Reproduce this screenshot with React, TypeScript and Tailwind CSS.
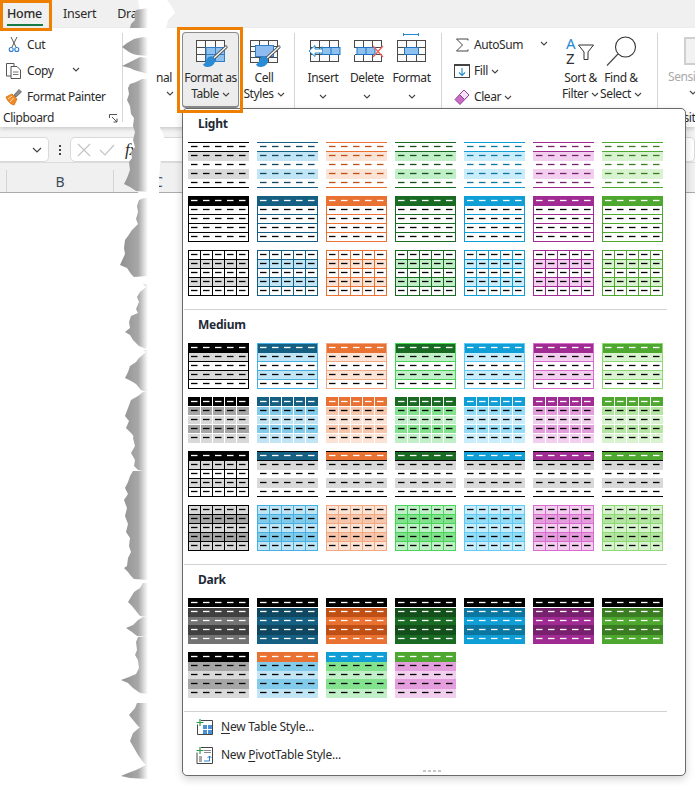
import type { ReactNode } from 'react';

type Theme = { c: string; dark: string; t80: string; t60: string; t40: string };
type Kind = 'light1' | 'light2' | 'light3' | 'med1' | 'med2' | 'med3' | 'med4' | 'dark1' | 'dark2';

const black: Theme = { c: '#000000', dark: '#000000', t80: '#d9d9d9', t60: '#a6a6a6', t40: '#000000' };
const blue: Theme = { c: '#156082', dark: '#0f4761', t80: '#c1e5f5', t60: '#83cbeb', t40: '#45b0e1' };
const orange: Theme = { c: '#e97132', dark: '#c04f15', t80: '#fbe3d6', t60: '#f6c6ad', t40: '#f1a983' };
const green: Theme = { c: '#196b24', dark: '#124f1a', t80: '#c1f0c8', t60: '#83e28e', t40: '#47d459' };
const cyan: Theme = { c: '#0f9ed5', dark: '#0b769f', t80: '#caedfb', t60: '#95dcf7', t40: '#61cbf3' };
const purple: Theme = { c: '#a02b93', dark: '#77206d', t80: '#f2cfee', t60: '#e59edd', t40: '#d86dcd' };
const lime: Theme = { c: '#4ea72e', dark: '#3a7c22', t80: '#d9f2d0', t60: '#b4e5a2', t40: '#8ed973' };
const themes = [black, blue, orange, green, cyan, purple, lime];

const R = (x: number, y: number, w: number, h: number, fill: string, key: string) => (
  <rect key={key} x={x} y={y} width={w} height={h} fill={fill} />
);

// five rows of dashes, the header row may be another colour
const dashes = (header: string, body: string) => (
  <g shapeRendering="geometricPrecision">
    {[4, 13, 22, 31, 40].map((y, row) =>
      [3, 15, 27, 39, 51].map((x) => (
        <rect key={`d${row}-${x}`} x={x} y={y - 0.15} width={6.5} height={1.3} fill={row === 0 ? header : body} />
      )),
    )}
  </g>
);

const hLines = (ys: number[], color: string) => ys.map((y) => R(0, y, 61, 1, color, `h${y}`));
const vLines = (xs: number[], color: string) => xs.map((x) => R(x, 0, 1, 46, color, `v${x}`));

const Swatch = ({ kind, t, alt, plain }: { kind: Kind; t: Theme; alt?: Theme; plain?: boolean }) => {
  let body: ReactNode = null;
  if (kind === 'light1') {
    body = (
      <>
        {R(0, 9, 61, 10, t.t80, 'b1')}
        {R(0, 27, 61, 10, t.t80, 'b2')}
        {hLines([0, 9, 45], t.c)}
        {dashes(t.dark, t.dark)}
      </>
    );
  }
  if (kind === 'light2') {
    body = (
      <>
        {R(0, 0, 61, 10, t.c, 'hd')}
        {hLines([18, 27, 36, 45], t.c)}
        {vLines([0, 60], t.c)}
        {dashes('#ffffff', '#000000')}
      </>
    );
  }
  if (kind === 'light3') {
    body = (
      <>
        {R(0, 9, 61, 10, t.t80, 'b1')}
        {R(0, 27, 61, 10, t.t80, 'b2')}
        {hLines([0, 9, 18, 27, 36, 45], t.c)}
        {vLines([0, 12, 24, 36, 48, 60], t.c)}
        {dashes('#000000', '#000000')}
      </>
    );
  }
  if (kind === 'med1') {
    body = (
      <>
        {R(0, 9, 61, 10, t.t80, 'b1')}
        {R(0, 27, 61, 10, t.t80, 'b2')}
        {hLines([0, 18, 27, 36, 45], t.t40)}
        {vLines([0, 60], t.t40)}
        {R(1, 1, 59, 8.5, t.c, 'hd')}
        {dashes('#ffffff', '#000000')}
      </>
    );
  }
  if (kind === 'med2') {
    body = (
      <>
        {R(0, 0, 61, 9, t.c, 'hd')}
        {R(0, 10, 61, 8, t.t60, 'r2')}
        {R(0, 19, 61, 8, t.t80, 'r3')}
        {R(0, 28, 61, 8, t.t60, 'r4')}
        {R(0, 37, 61, 9, t.t80, 'r5')}
        {vLines([12, 24, 36, 48], '#ffffff')}
        {dashes('#ffffff', '#000000')}
      </>
    );
  }
  if (kind === 'med3' && !plain) {
    body = (
      <>
        {R(0, 0, 61, 10, t.c, 'hd')}
        {R(0, 10, 61, 9, '#d9d9d9', 'b1')}
        {R(0, 27, 61, 10, '#d9d9d9', 'b2')}
        {hLines([0, 9, 45], '#000000')}
        {dashes('#ffffff', '#000000')}
      </>
    );
  }
  if (kind === 'med3' && plain) {
    body = (
      <>
        {R(0, 9, 61, 10, t.t80, 'b1')}
        {R(0, 27, 61, 10, t.t80, 'b2')}
        {hLines([0, 9, 18, 27, 36, 45], '#000000')}
        {vLines([0, 12, 24, 36, 48, 60], '#000000')}
        {R(0, 0, 61, 10, '#000000', 'hd')}
        {dashes('#ffffff', '#000000')}
      </>
    );
  }
  if (kind === 'med4') {
    body = (
      <>
        {R(0, 0, 61, 46, t.t80, 'bg')}
        {R(0, 9, 61, 10, t.t60, 'b1')}
        {R(0, 27, 61, 10, t.t60, 'b2')}
        {hLines([0, 9, 18, 27, 36, 45], t.t40)}
        {vLines([0, 12, 24, 36, 48, 60], t.t40)}
        {dashes('#000000', '#000000')}
      </>
    );
  }
  if (kind === 'dark1') {
    const deep = t === black ? '#404040' : t.dark;
    const base = t === black ? '#737373' : t.c;
    body = (
      <>
        {R(0, 0, 61, 9, '#000000', 'hd')}
        {R(0, 10, 61, 9, deep, 'r2')}
        {R(0, 19, 61, 8, base, 'r3')}
        {R(0, 27, 61, 10, deep, 'r4')}
        {R(0, 37, 61, 9, base, 'r5')}
        {dashes('#ffffff', '#ffffff')}
      </>
    );
  }
  if (kind === 'dark2' && alt) {
    body = (
      <>
        {R(0, 0, 61, 10, t.c, 'hd')}
        {R(0, 10, 61, 9, alt.t60, 'r2')}
        {R(0, 19, 61, 8, alt.t80, 'r3')}
        {R(0, 27, 61, 10, alt.t60, 'r4')}
        {R(0, 37, 61, 9, alt.t80, 'r5')}
        {dashes('#ffffff', '#000000')}
      </>
    );
  }
  return (
    <svg width="61" height="46" viewBox="0 0 61 46" shapeRendering="crispEdges" className="block">
      {body}
    </svg>
  );
};

const Chevron = ({ className = '' }: { className?: string }) => (
  <svg width="8" height="5" viewBox="0 0 8 5" className={className}>
    <path d="M1 1l3 3 3-3" fill="none" stroke="#444" strokeWidth="1.1" />
  </svg>
);

const CutIcon = () => (
  <svg width="18" height="18" viewBox="0 0 18 18">
    <path d="M6 1l5 10M12 1L7 11" stroke="#555" strokeWidth="1" fill="none" />
    <circle cx="6.2" cy="13.5" r="2" fill="none" stroke="#2b7cd3" strokeWidth="1.1" />
    <circle cx="11.8" cy="13.5" r="2" fill="none" stroke="#2b7cd3" strokeWidth="1.1" />
  </svg>
);

const CopyIcon = () => (
  <svg width="18" height="18" viewBox="0 0 18 18">
    <path d="M6 14H1.5V1.5H9V4" fill="none" stroke="#555" />
    <path d="M6 4.5h6l3.5 3.5v8.5H6z" fill="#fff" stroke="#555" />
    <path d="M8 10h5.5M8 12.5h5.5" stroke="#777" />
  </svg>
);

const PainterIcon = () => (
  <svg width="18" height="18" viewBox="0 0 18 18">
    <path d="M1 9l6-3 5 5-3 6c-2-.5-3-1-4.5-2.5S1.500 11 1 9z" fill="#f08a24" stroke="#d86a10" strokeWidth=".8" />
    <path d="M3 11l4-3M5 14l3.500-4" stroke="#fff" strokeWidth=".7" />
    <path d="M9 7l5-5.500 2.500 2.500L11 9z" fill="#8a8a8a" stroke="#555" strokeWidth=".7" />
  </svg>
);

const Launcher = () => (
  <svg width="9" height="9" viewBox="0 0 9 9">
    <path d="M.5 4V.5H8M3 3l5 5M8 4.500V8H4.500" fill="none" stroke="#555" />
  </svg>
);

// paint brush laid over the two table icons
const Brush = () => (
  <g>
    <path d="M21 26l12-11" stroke="#555" strokeWidth="3.2" strokeLinecap="round" />
    <path d="M21.500 25.500L33 15" stroke="#fff" strokeWidth="1.300" strokeLinecap="round" />
    <path d="M19.500 24.500c-2.500-.6-5 .5-5.800 3-.6 2-1.700 3.700-3.700 5 .8 1.800 2.800 2.700 5 2.500 3.500-.3 6.500-2.500 7-5.500.3-2-.6-3.800-2.500-5z" fill="#2a8ad4" />
  </g>
);

const TableLines = ({ x, y, w, h, cols, rows }: { x: number; y: number; w: number; h: number; cols: number; rows: number }) => (
  <g stroke="#4a4a4a" strokeWidth="1" fill="none" shapeRendering="crispEdges">
    <rect x={x} y={y} width={w} height={h} fill="#fafafa" />
    {Array.from({ length: cols - 1 }, (_, i) => (
      <path key={`c${i}`} d={`M${x + ((i + 1) * w) / cols} ${y}v${h}`} />
    ))}
    {Array.from({ length: rows - 1 }, (_, i) => (
      <path key={`r${i}`} d={`M${x} ${y + ((i + 1) * h) / rows}h${w}`} />
    ))}
  </g>
);

const FormatTableIcon = () => (
  <svg width="36" height="38" viewBox="0 0 36 38">
    <TableLines x={3.5} y={8.5} w={28} h={21} cols={3} rows={3} />
    <rect x="13" y="15.500" width="18.500" height="14" fill="#8fc1ee" stroke="#2f7fc8" />
    <path d="M22.500 15.500v14M13 22.500h18.500" stroke="#2f7fc8" />
    <Brush />
  </svg>
);

const CellStylesIcon = () => (
  <svg width="36" height="38" viewBox="0 0 36 38">
    <TableLines x={4.5} y={8.5} w={27} h={22} cols={3} rows={4} />
    <rect x="9.500" y="13.500" width="18" height="11" fill="#8fbcee" stroke="#2f7fc8" />
    <Brush />
  </svg>
);

const InsertIcon = () => (
  <svg width="36" height="38" viewBox="0 0 36 38">
    <TableLines x={5.5} y={8.5} w={28} h={21} cols={3} rows={3} />
    <rect x="17" y="15.500" width="18" height="7" fill="#8fc1ee" stroke="#1f74c4" />
    <path d="M26 15.500v7" stroke="#1f74c4" />
    <path d="M17 14.500v2.500h-7v-3.500L4 19l6 5.500V21h7" fill="#fff" stroke="#1f8ad4" />
  </svg>
);

const DeleteIcon = () => (
  <svg width="36" height="38" viewBox="0 0 36 38">
    <path d="M5.500 15.500v-7h27v7M5.500 22.500v7h27v-7M14.500 8.500v7M23.500 8.500v7M14.500 22.500v7M23.500 22.500v7M5.500 15.500h27M5.500 22.500h27" fill="none" stroke="#4a4a4a" shapeRendering="crispEdges" />
    <rect x="8" y="15.500" width="18" height="7" fill="#8fc1ee" stroke="#1f74c4" />
    <path d="M17 15.500v7" stroke="#1f74c4" />
    <path d="M24 14l10 11M34 14L24 25" stroke="#f0605a" strokeWidth="1.300" />
  </svg>
);

const FormatIcon = () => (
  <svg width="36" height="38" viewBox="0 0 36 38">
    <path d="M9.500 2.500h15M9.500 1v3M24.500 1v3" stroke="#1f8ad4" fill="none" />
    <TableLines x={3.5} y={8.5} w={28} h={21} cols={3} rows={3} />
    <rect x="10.500" y="15.500" width="14" height="7" fill="#8fc1ee" stroke="#1f74c4" />
  </svg>
);

const SortIcon = () => (
  <svg width="36" height="38" viewBox="0 0 36 38">
    <text x="3" y="17" fontSize="15" fill="#1f8ad4" fontFamily="'Noto Sans', sans-serif">A</text>
    <text x="3" y="32" fontSize="15" fill="#333" fontFamily="'Noto Sans', sans-serif">Z</text>
    <path d="M15.500 13h15l-5.500 7v7.500h-4V20z" fill="#fff" stroke="#333" />
  </svg>
);

const FindIcon = () => (
  <svg width="36" height="38" viewBox="0 0 36 38">
    <circle cx="22.500" cy="15" r="10" fill="#fff" stroke="#333" strokeWidth="1.100" />
    <path d="M15 22L4 33.500" stroke="#444" strokeWidth="1.100" />
  </svg>
);

const SumIcon = () => (
  <svg width="16" height="16" viewBox="0 0 16 16">
    <path d="M14 3.500V2H2.500L8.500 8l-6 6H14v-1.500" fill="none" stroke="#444" />
  </svg>
);

const FillIcon = () => (
  <svg width="16" height="16" viewBox="0 0 16 16">
    <rect x=".5" y="1.500" width="15" height="13" fill="#fff" stroke="#444" />
    <path d="M.5 1.500h15v1.500H.5z" fill="#444" />
    <path d="M8 5v7.500M5 9.500l3 3 3-3" fill="none" stroke="#1f8ad4" strokeWidth="1.100" />
  </svg>
);

const ClearIcon = () => (
  <svg width="16" height="16" viewBox="0 0 16 16">
    <path d="M10 1l5 5-9 9.500-5-5z" fill="#c86dc6" stroke="#9a3c98" />
    <path d="M10 1l5 5-4.500 4.500-5-5z" fill="#f5e3f5" stroke="#9a3c98" />
  </svg>
);

const NewTableIcon = () => (
  <svg width="17" height="17" viewBox="0 0 17 17">
    <path d="M1.500 5.500v10h15v-14H5" fill="none" stroke="#444" />
    <rect x="7" y="6" width="9" height="9" fill="#4a90d9" />
    <path d="M7 10.500h9M11.500 6v9" stroke="#fff" />
    <path d="M4 0v7M.5 3.500h7" stroke="#2e9a4b" strokeWidth="1.200" />
  </svg>
);

const NewPivotIcon = () => (
  <svg width="17" height="17" viewBox="0 0 17 17">
    <path d="M1 5.500v11h15.500V.5H5" fill="none" stroke="#444" />
    <path d="M8 3.500h7M8 5.500h7" stroke="#888" />
    <path d="M3 9h3v6H3z" fill="#aaa" />
    <path d="M8 14h5.500V9M11.500 11l2-2 2 2" fill="none" stroke="#2a80d0" />
    <path d="M4 0v7M.5 3.500h7" stroke="#2e9a4b" strokeWidth="1.200" />
  </svg>
);

const SmallRow = ({ icon, children }: { icon: ReactNode; children: ReactNode }) => (
  <div className="flex items-center h-[26px]">
    <div className="w-[27px] pl-[5px] flex items-center">{icon}</div>
    {children}
  </div>
);

const BigButton = ({ width, icon, lines, active }: { width: string; icon: ReactNode; lines: ReactNode[]; active?: boolean }) => (
  <div
    className={`${width} h-[76px] flex flex-col items-center shrink-0 ${
      active ? 'bg-[#ededed] border border-b-2 border-[#8c8c8c] rounded-[4px]' : ''
    }`}
  >
    <div className={active ? 'h-[37px] -mt-px' : 'h-[38px]'}>{icon}</div>
    {lines.map((line, i) => (
      <div key={i} className={`h-[16px] leading-[16px] flex items-center gap-[3px] whitespace-nowrap ${active && i === 0 ? 'mt-px' : ''}`}>
        {line}
      </div>
    ))}
  </div>
);

const Sep = () => <div className="w-px h-[89px] mt-[5px] bg-[#d6d6d6] shrink-0" />;

const Section = ({ title, children }: { title: string; children: ReactNode }) => (
  <div>
    <div className="h-[33px] pl-[15px] pb-[3px] flex items-center font-bold text-[#1f2a37]">{title}</div>
    <div className="grid grid-cols-[repeat(7,61px)] gap-x-[8px] gap-y-[8px] pl-[5px] mb-[13px]">{children}</div>
    <div className="h-px ml-px w-[483px] bg-[#d2d2d2]" />
  </div>
);

const tears = [
  '136,10 134,14 135,20 131,24 130,28 148,28 148,8',
  '122,47 127,43 134,39 143,37 148,38 148,56 137,55 133,54 129,52',
  '122,66 128,63 134,60 140,57 148,58 148,74 141,72 134,70 130,68',
  '142,79 136,82 130,84 128,88 129,94 127,100 130,106 131,114 134,118 133,126 135,132 133,140 135,147 131,152 132,158 129,162 130,170 127,178 124,184 130,187 136,191 148,192 148,79',
  '144,198 139,200 137,206 138,212 136,219 138,224 132,230 128,236 125,240 124,248 125,254 120,265 127,268 131,274 134,277 148,276 148,198',
  '143,284 146,287 140,292 137,297 139,302 136,309 138,313 131,316 129,322 130,328 125,332 130,335 133,340 139,346 146,349 148,345 148,284',
  '143,350 146,352 139,358 136,362 130,366 128,372 125,378 131,381 136,384 141,390 146,392 148,392 148,350',
  '143,392 138,396 131,400 128,408 125,416 129,421 126,428 132,434 136,440 148,440 148,392',
  '143,421 136,423 131,426 135,432 133,438 135,446 131,453 135,460 134,466 138,470 148,472 148,421',
  '133,471 130,476 128,482 125,488 128,494 124,500 127,508 125,516 128,524 126,532 130,538 129,546 131,552 128,558 127,566 124,568 128,572 131,576 134,579 148,580 148,471',
  '143,583 140,588 134,592 131,597 128,602 132,606 136,611 140,616 148,617 148,583',
  '143,617 138,620 133,625 126,628 132,632 137,636 148,637 148,617',
  '138,637 136,642 137,650 135,655 138,660 139,668 136,674 129,677 121,680 128,683 133,688 140,693 148,694 148,637',
  '137,703 135,708 129,715 133,720 138,726 141,729 148,730 148,703',
  '139,728 133,733 130,741 134,748 138,755 143,762 146,765 136,770 128,773 121,776 130,778 148,779 148,728',
];

const Tear = () => (
  <svg width="695" height="786" viewBox="0 0 695 786" className="absolute left-0 top-0 pointer-events-none">
    <defs>
      <linearGradient id="tearShade" gradientUnits="userSpaceOnUse" x1="120" y1="0" x2="148" y2="0">
        <stop offset="0" stopColor="#8f8f8f" />
        <stop offset="0.65" stopColor="#a8a8a8" />
        <stop offset="1" stopColor="#ffffff" />
      </linearGradient>
    </defs>
    <polygon
      points="138,0 167,0 172,7 175,13 168,20 166,28 156,60 154,100 160,128 163,133 165,142 163,152 160,165 159,180 159,193 150,200 150,786 140,786 146,500 146,193 138,193 138,28 140,12"
      fill="#ffffff"
    />
    {tears.map((points) => (
      <polygon key={points} points={points} fill="url(#tearShade)" />
    ))}
  </svg>
);

export default function App() {
  return (
    <div className="relative w-[695px] h-[786px] overflow-hidden bg-white text-[12px] text-[#2b2b2b] font-['Noto_Sans','Open_Sans',sans-serif] tracking-[-0.25px]">
      {/* tab strip */}
      <div className="h-[28px] bg-[#f0f0f0] flex items-center text-[12.5px]">
        <div className="relative ml-[7px] w-[36px] font-medium">
          Home
          <div className="absolute left-0 right-0 top-[19px] h-[2px] bg-[#187a45]" />
        </div>
        <div className="ml-[20px]">Insert</div>
        <div className="ml-[21px]">Draw</div>
      </div>

      {/* ribbon */}
      <div className="relative flex h-[99px] bg-white shadow-[0_2px_4px_rgba(0,0,0,0.16)] overflow-hidden tracking-[-0.42px]">
        <div className="w-[122px] shrink-0 pt-[4px]">
          <SmallRow icon={<CutIcon />}>Cut</SmallRow>
          <SmallRow icon={<CopyIcon />}>
            <span>Copy</span>
            <Chevron className="ml-[19px] mb-[3px]" />
          </SmallRow>
          <SmallRow icon={<PainterIcon />}>Format Painter</SmallRow>
          <div className="flex items-center justify-between pl-[3px] pr-[4px] h-[16px]">
            <span>Clipboard</span>
            <Launcher />
          </div>
        </div>
        <Sep />
        <div className="w-[59px] shrink-0 pt-[42px] pr-[10px] flex flex-col items-end">
          <div className="h-[16px] leading-[16px]">nal</div>
          <Chevron className="mt-[5px] -mr-[2px]" />
        </div>
        <div className="flex items-start pt-[4px] shrink-0">
          <BigButton
            width="w-[57px]"
            active
            icon={<FormatTableIcon />}
            lines={['Format as', <><span>Table</span><Chevron /></>]}
          />
          <div className="ml-px mr-[6px]">
            <BigButton
              width="w-[48px]"
              icon={<CellStylesIcon />}
              lines={['Cell', <><span>Styles</span><Chevron /></>]}
            />
          </div>
        </div>
        <Sep />
        <div className="flex items-start pt-[4px] pl-[6px] pr-[7px] shrink-0">
          <BigButton width="w-[44px]" icon={<InsertIcon />} lines={['Insert', <Chevron className="mt-[4px]" />]} />
          <BigButton width="w-[44px]" icon={<DeleteIcon />} lines={['Delete', <Chevron className="mt-[4px]" />]} />
          <BigButton width="w-[45px]" icon={<FormatIcon />} lines={['Format', <Chevron className="mt-[4px]" />]} />
        </div>
        <Sep />
        <div className="w-[118px] shrink-0 pt-[4px] pl-[5px]">
          <SmallRow icon={<div className="ml-[2px]"><SumIcon /></div>}>
            <span>AutoSum</span>
            <Chevron className="ml-[17px] mb-[3px]" />
          </SmallRow>
          <SmallRow icon={<div className="ml-[2px]"><FillIcon /></div>}>
            <span>Fill</span>
            <Chevron className="ml-[3px]" />
          </SmallRow>
          <SmallRow icon={<div className="ml-[2px]"><ClearIcon /></div>}>
            <span>Clear</span>
            <Chevron className="ml-[3px]" />
          </SmallRow>
        </div>
        <div className="flex items-start pt-[4px] shrink-0">
          <BigButton width="w-[41px]" icon={<SortIcon />} lines={['Sort &', <><span>Filter</span><Chevron /></>]} />
          <BigButton width="w-[40px]" icon={<FindIcon />} lines={['Find &', <><span>Select</span><Chevron /></>]} />
        </div>
        <div className="w-[16px] shrink-0" />
        <Sep />
        <div className="ml-[10px] pt-[9px] w-[60px] shrink-0 text-[#a9a9a9]">
          <div className="ml-[16px] w-[30px] h-[28px] bg-[#f2f2f2] border-2 border-[#cfcfcf]" />
          <div className="mt-[4px] h-[16px] leading-[16px]">Sensitivity</div>
          <Chevron className="mt-[5px] ml-[21px]" />
          <div className="mt-[14px] ml-[-4px] text-[#2b2b2b] whitespace-nowrap">Sensitivity</div>
        </div>
      </div>

      {/* formula bar */}
      <div className="h-[36px] bg-[#f3f3f3] border-b border-[#dcdcdc] flex items-start pt-[10px]">
        <div className="w-[49px] h-[25px] bg-white border border-l-0 border-[#d9d9d9] rounded-r-[5px] flex items-center justify-end pr-[6px] shrink-0">
          <svg width="10" height="6" viewBox="0 0 10 6">
            <path d="M1 1l4 4 4-4" fill="none" stroke="#444" strokeWidth="1.200" />
          </svg>
        </div>
        <div className="w-[21px] h-[25px] flex flex-col items-center justify-center gap-[2px] shrink-0">
          <div className="w-[2px] h-[2px] bg-[#444]" />
          <div className="w-[2px] h-[2px] bg-[#444]" />
          <div className="w-[2px] h-[2px] bg-[#444]" />
        </div>
        <div className="flex-1 h-[25px] bg-white border border-[#d9d9d9] rounded-[5px] flex items-center pl-[6px]">
          <svg width="14" height="14" viewBox="0 0 14 14">
            <path d="M1 1l12 12M13 1L1 13" stroke="#c4c4c4" strokeWidth="1.200" />
          </svg>
          <svg width="16" height="12" viewBox="0 0 16 12" className="ml-[8px]">
            <path d="M1 6l5 5L15 1" fill="none" stroke="#c4c4c4" strokeWidth="1.200" />
          </svg>
          <span className="ml-[10px] italic text-[17px] leading-none font-['Liberation_Serif',serif]">fx</span>
        </div>
      </div>

      {/* column headers */}
      <div className="h-[30px] pt-[7px] bg-[#f0f0f0] border-b border-[#ababab] flex">
        <div className="w-[7px] border-r border-[#d4d4d4]" />
        <div className="w-[107px] border-r border-[#d4d4d4] flex items-center justify-center text-[14px] text-[#3a4a5a]">B</div>
        <div className="pl-[40px] flex items-center text-[14px] text-[#3a4a5a]">C</div>
      </div>

      <Tear />

      {/* gallery panel */}
      <div className="absolute left-[182px] top-[108px] w-[504px] h-[668px] bg-white border border-[#6b6b6b] rounded-[5px] shadow-[0_3px_8px_rgba(0,0,0,0.18)]">
        <Section title="Light">
          {themes.map((t) => <Swatch key={t.c} kind="light1" t={t} />)}
          {themes.map((t) => <Swatch key={t.c} kind="light2" t={t} />)}
          {themes.map((t) => <Swatch key={t.c} kind="light3" t={t} />)}
        </Section>
        <Section title="Medium">
          {themes.map((t) => <Swatch key={t.c} kind="med1" t={t} />)}
          {themes.map((t) => <Swatch key={t.c} kind="med2" t={t} />)}
          {themes.map((t) => <Swatch key={t.c} kind="med3" t={t} plain={t === black} />)}
          {themes.map((t) => <Swatch key={t.c} kind="med4" t={t} />)}
        </Section>
        <Section title="Dark">
          {themes.map((t) => <Swatch key={t.c} kind="dark1" t={t} />)}
          <Swatch kind="dark2" t={black} alt={black} />
          <Swatch kind="dark2" t={orange} alt={blue} />
          <Swatch kind="dark2" t={cyan} alt={green} />
          <Swatch kind="dark2" t={lime} alt={purple} />
        </Section>
        <div className="pt-px">
          <div className="h-[28px] flex items-center pl-[13px] gap-[8px]">
            <NewTableIcon />
            <span><span className="underline underline-offset-2">N</span>ew Table Style...</span>
          </div>
          <div className="h-[28px] flex items-center pl-[13px] gap-[8px]">
            <NewPivotIcon />
            <span>New <span className="underline underline-offset-2">P</span>ivotTable Style...</span>
          </div>
          <div className="flex justify-center gap-[2px] mt-px pr-[4px]">
            <div className="w-[3px] h-[2px] bg-[#c8c8c8]" />
            <div className="w-[3px] h-[2px] bg-[#c8c8c8]" />
            <div className="w-[3px] h-[2px] bg-[#c8c8c8]" />
            <div className="w-[3px] h-[2px] bg-[#c8c8c8]" />
          </div>
        </div>
      </div>

      {/* orange call-outs */}
      <div className="absolute left-0 top-0 w-[52px] h-[31px] border-[3px] border-[#ee7f00]" />
      <div className="absolute left-[177px] top-[27px] w-[66px] h-[86px] border-[3px] border-[#ee7f00]" />
    </div>
  );
}
